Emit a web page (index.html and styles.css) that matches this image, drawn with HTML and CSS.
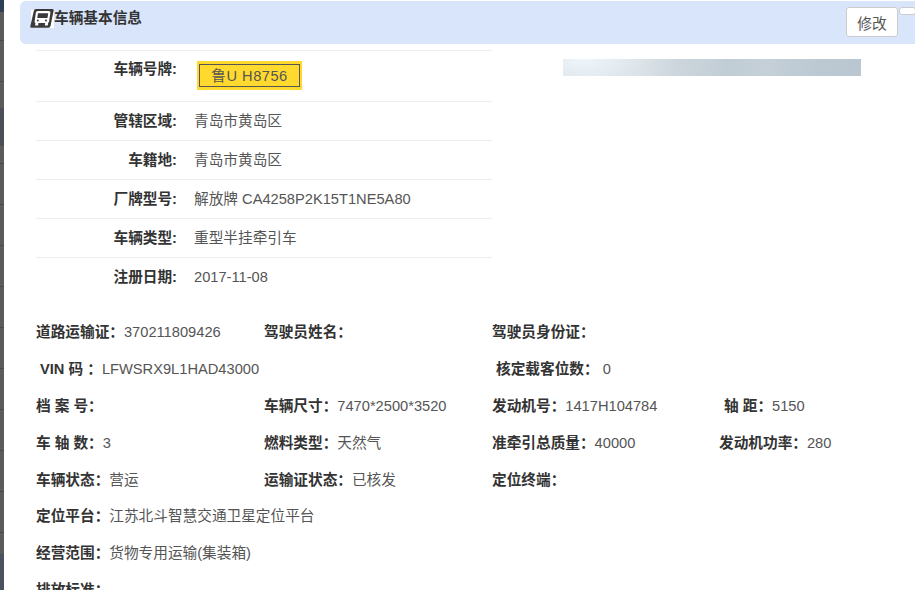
FILE: index.html
```html
<!DOCTYPE html>
<html lang="zh-CN">
<head>
<meta charset="utf-8">
<title>车辆基本信息</title>
<link rel="stylesheet" href="styles.css">
</head>
<body>
<div class="page">
  <div class="backdrop"></div>
  <main class="modal">
    <header class="head">
      <svg class="head-icon" viewBox="0 0 24 19" width="24" height="19" aria-hidden="true">
        <rect x="1" y="1" width="23" height="18" fill="#fff"/>
        <path d="M6 0h16.500q1.500 0 1.200 1.500L20.500 17q-.4 1.800-2 1.800H1.500Q0 18.800.3 17.300L3.800 2Q4.200 0 6 0z" fill="#3a3a3a"/>
        <path d="M8.500 2h10.500q1.600 0 1.400 1.600l-1.300 9q-.2 1.400-1.800 1.400H6q-1.600 0-1.400-1.600l1.300-9Q6.100 2 8.500 2z" fill="#fff"/>
        <path d="M8 4.200h10.200l-.7 4.800H7.300z" fill="#3a3a3a"/>
        <circle cx="7.800" cy="11.400" r="1" fill="#3a3a3a"/>
        <circle cx="16" cy="11.400" r="1" fill="#3a3a3a"/>
        <path d="M5.500 13.500h3l-.4 3H5.100zM15.200 13.500h3l-.4 3h-3z" fill="#fff"/>
      </svg>
      <h1 class="head-title">车辆基本信息</h1>
      <button class="btn" type="button">修改</button>
      <span class="btn-clip"></span>
    </header>

    <section class="top">
      <div class="table">
        <div class="row row-first"><b class="k">车辆号牌:</b><span class="plate"><span class="plate-in">鲁U H8756</span></span></div>
        <div class="row"><b class="k">管辖区域:</b><span class="v">青岛市黄岛区</span></div>
        <div class="row"><b class="k">车籍地:</b><span class="v">青岛市黄岛区</span></div>
        <div class="row"><b class="k">厂牌型号:</b><span class="v">解放牌 CA4258P2K15T1NE5A80</span></div>
        <div class="row"><b class="k">车辆类型:</b><span class="v">重型半挂牵引车</span></div>
        <div class="row"><b class="k">注册日期:</b><span class="v">2017-11-08</span></div>
      </div>
      <div class="photo"></div>
    </section>

    <section class="grid">
      <div><b>道路运输证：</b><span>370211809426</span></div>
      <div><b>驾驶员姓名：</b></div>
      <div class="wide2"><b>驾驶员身份证：</b></div>

      <div class="wide2 ind"><b>VIN 码 ：</b><span>LFWSRX9L1HAD43000</span></div>
      <div class="wide2 ind"><b>核定载客位数：</b> <span>0</span></div>

      <div><b>档 案 号：</b></div>
      <div><b>车辆尺寸：</b><span>7470*2500*3520</span></div>
      <div><b>发动机号：</b><span>1417H104784</span></div>
      <div class="ind"><b>轴 距：</b><span>5150</span></div>

      <div><b>车 轴 数：</b><span>3</span></div>
      <div><b>燃料类型：</b><span>天然气</span></div>
      <div><b>准牵引总质量：</b><span>40000</span></div>
      <div class="pull"><b>发动机功率：</b><span>280</span></div>

      <div><b>车辆状态：</b><span>营运</span></div>
      <div><b>运输证状态：</b><span>已核发</span></div>
      <div class="wide2"><b>定位终端：</b></div>

      <div class="wide4"><b>定位平台：</b><span>江苏北斗智慧交通卫星定位平台</span></div>
      <div class="wide4"><b>经营范围：</b><span>货物专用运输(集装箱)</span></div>
      <div class="wide4"><b>排放标准：</b></div>
    </section>
  </main>
</div>
</body>
</html>
```
FILE: styles.css
```css
* { box-sizing: border-box; }
html, body { margin: 0; height: 590px; overflow: hidden; background: #fff; }
body {
  font-family: "Liberation Sans", "Noto Sans CJK SC", sans-serif;
  font-size: 14.67px;
  color: #333;
}
.page { display: flex; height: 590px; }
.backdrop {
  flex: 0 0 4px;
  background:
    linear-gradient(#2f3f55 0 12px, transparent 12px),
    linear-gradient(transparent 108px, #4a4f58 108px 146px, transparent 146px),
    linear-gradient(transparent 554px, #4a525e 554px),
    repeating-linear-gradient(#5b5b5b 0 40px, #4b4b4b 40px 41px);
}
.modal { flex: 1; min-width: 0; padding-top: 1px; }
.head {
  display: flex;
  align-items: flex-start;
  height: 43px;
  margin-left: 16px;
  padding: 6px 0 0 10px;
  background: #d9e5fb;
  border-radius: 6px 0 0 6px;
  overflow: hidden;
}
.head-icon { flex: none; margin-top: 2px; }
.head-title {
  flex: 1;
  margin: 1px 0 0;
  font-size: 14.67px;
  line-height: 20px;
  font-weight: 700;
  color: #333;
}
.btn {
  flex: none;
  width: 52px;
  height: 30px;
  padding: 0;
  font: 14.67px "Liberation Sans", "Noto Sans CJK SC", sans-serif;
  color: #555;
  background: #fff;
  border: 1px solid #ccc;
  border-radius: 3px;
}
.btn-clip {
  flex: none;
  width: 17px;
  height: 8px;
  margin: 0 -1px 0 1px;
  background: #fff;
  border: 1px solid #ccc;
  border-radius: 3px;
}
.top { display: flex; align-items: flex-start; margin: 6px 0 0 32px; height: 245px; }
.table { flex: 0 0 456px; }
.row {
  display: flex;
  align-items: center;
  height: 39px;
  border-top: 1px solid #eee;
}
.row-first { height: 51px; align-items: flex-start; padding-top: 8px; }
.k { flex: 0 0 141px; text-align: right; line-height: 20px; }
.v { margin: 0 0 1px 17px; line-height: 20px; color: #555; }
.plate {
  margin: 2px 0 0 20px;
  padding: 3px 2px;
  background: #ffd92e;
}
.plate-in {
  display: block;
  width: 101px;
  height: 23px;
  line-height: 23px;
  text-align: center;
  letter-spacing: .5px;
  color: #555;
  border: 1px solid #555;
}
.photo {
  flex: 0 0 298px;
  height: 17px;
  margin: 9px 0 0 71px;
  background:
    radial-gradient(ellipse 60px 30px at 20px 0, #eef6fb 0%, rgba(238,246,251,0) 100%),
    linear-gradient(95deg, #dbe3e9 0%, #dde4e9 25%, #cdd6dd 38%, #c1cdd5 55%, #c5d0d8 68%, #bcc9d3 85%, #bac7d1 100%);
}
.grid {
  display: grid;
  grid-template-columns: repeat(4, 228px);
  grid-auto-rows: 36.8px;
  align-items: center;
  margin: 19px 0 0 32px;
  line-height: 20px;
  white-space: nowrap;
}
.grid span { color: #555; }
.wide2 { grid-column: span 2; }
.wide4 { grid-column: span 4; }
.ind { padding-left: 4px; }
.pull { margin-left: -1px; }
```
